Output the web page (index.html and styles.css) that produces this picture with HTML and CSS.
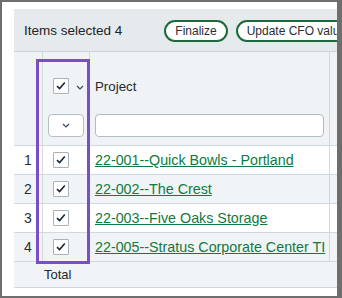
FILE: index.html
```html
<!DOCTYPE html>
<html lang="en">
<head>
  <meta charset="UTF-8">
  <title>Selected items</title>
  <link rel="stylesheet" href="styles.css">
</head>
<body>
  <div class="frame">
    <div class="toolbar">
      <span class="sel-count">Items selected 4</span>
      <span class="divider"></span>
      <button class="pill">Finalize</button>
      <button class="pill">Update CFO value</button>
    </div>

    <div class="grid-wrap">
      <div class="grid">
        <!-- header row -->
        <div class="cell head"></div>
        <div class="cell head check-cell">
          <span class="box"><svg viewBox="0 0 16 16" width="16" height="16"><path d="M4 8.2 L6.6 10.6 L11.8 4.6" fill="none" stroke="#1b2431" stroke-width="1.6"/></svg></span>
          <svg class="chev" viewBox="0 0 8 5" width="8" height="5"><path d="M1 1 L4 4 L7 1" fill="none" stroke="#3b4a63" stroke-width="1.2"/></svg>
        </div>
        <div class="cell head title">Project</div>
        <div class="cell head"></div>

        <!-- filter row -->
        <div class="cell filter"></div>
        <div class="cell filter"><span class="drop"><svg viewBox="0 0 8 5" width="8" height="5"><path d="M1 1 L4 4 L7 1" fill="none" stroke="#3b4a63" stroke-width="1.2"/></svg></span></div>
        <div class="cell filter"><span class="search"></span></div>
        <div class="cell filter"></div>

        <div class="cell row num">1</div>
        <div class="cell row check-cell"><span class="box"><svg viewBox="0 0 16 16" width="16" height="16"><path d="M4 8.2 L6.6 10.6 L11.8 4.6" fill="none" stroke="#1b2431" stroke-width="1.6"/></svg></span></div>
        <div class="cell row"><a href="#">22-001--Quick Bowls - Portland</a></div>
        <div class="cell row"></div>

        <div class="cell row alt num">2</div>
        <div class="cell row alt check-cell"><span class="box"><svg viewBox="0 0 16 16" width="16" height="16"><path d="M4 8.2 L6.6 10.6 L11.8 4.6" fill="none" stroke="#1b2431" stroke-width="1.6"/></svg></span></div>
        <div class="cell row alt"><a href="#">22-002--The Crest</a></div>
        <div class="cell row alt"></div>

        <div class="cell row num">3</div>
        <div class="cell row check-cell"><span class="box"><svg viewBox="0 0 16 16" width="16" height="16"><path d="M4 8.2 L6.6 10.6 L11.8 4.6" fill="none" stroke="#1b2431" stroke-width="1.6"/></svg></span></div>
        <div class="cell row"><a href="#">22-003--Five Oaks Storage</a></div>
        <div class="cell row"></div>

        <div class="cell row alt num">4</div>
        <div class="cell row alt check-cell"><span class="box"><svg viewBox="0 0 16 16" width="16" height="16"><path d="M4 8.2 L6.6 10.6 L11.8 4.6" fill="none" stroke="#1b2431" stroke-width="1.6"/></svg></span></div>
        <div class="cell row alt"><a href="#">22-005--Stratus Corporate Center TI</a></div>
        <div class="cell row alt"></div>

        <div class="cell total"></div>
        <div class="cell total total-label">Total</div>
        <div class="cell total"></div>
        <div class="cell total"></div>
      </div>
      <div class="highlight"></div>
    </div>
  </div>
</body>
</html>
```

FILE: styles.css
```css
body {
  margin: 0;
  font-family: "Liberation Sans", Arial, sans-serif;
  color: #2b2f33;
}
.frame {
  width: 342px;
  height: 298px;
  box-sizing: border-box;
  border: 2px solid #6e6e6e;
  border-right-width: 5px;
  background: #fff;
  padding: 7px 0 0 12px;
  overflow: hidden;
}
.toolbar {
  height: 43px;
  box-sizing: border-box;
  background: #e5eaed;
  border-bottom: 1px solid #cdd5da;
  display: flex;
  align-items: center;
  padding-left: 10px;
  white-space: nowrap;
  padding-top: 1px;
}
.sel-count {
  font-size: 13.5px;
  color: #1f2328;
}
.divider {
  width: 1px;
  height: 22px;
  background: #c9d0d4;
  margin: 0 8px 0 34px;
}
.pill {
  font-family: inherit;
  font-size: 12px;
  color: #2a2e33;
  background: #fff;
  border: 2px solid #1d6a3e;
  border-radius: 11px;
  height: 22px;
  padding: 0 9px;
  margin-right: 8px;
  flex-shrink: 0;
}
.grid-wrap {
  position: relative;
}
.grid {
  display: grid;
  grid-template-columns: 29px 47px 240px 40px;
}
.cell {
  box-sizing: border-box;
  border-right: 1px solid #d2d9dd;
  display: flex;
  align-items: center;
  white-space: nowrap;
  overflow: hidden;
}
.head {
  height: 60px;
  padding-top: 8px;
  background: #eff3f5;
}
.title {
  font-size: 13.3px;
  padding-left: 5px;
  color: #24282c;
}
.filter {
  height: 34px;
  align-items: flex-start;
  padding-top: 2px;
  background: #eff3f5;
  border-bottom: 1px solid #d2d9dd;
}
.check-cell {
  padding-left: 10px;
}
.box {
  width: 16px;
  height: 16px;
  box-sizing: border-box;
  border: 1px solid #a9b3b9;
  background: #fff;
  border-radius: 1px;
  display: flex;
  align-items: center;
  justify-content: center;
}
.box svg {
  flex-shrink: 0;
}
.chev {
  margin-left: 7px;
  margin-top: 2px;
}
.drop {
  width: 36px;
  height: 23px;
  box-sizing: border-box;
  margin-left: 5px;
  border: 1px solid #b6c0c5;
  border-radius: 4px;
  background: #fff;
  display: flex;
  align-items: center;
  justify-content: center;
}
.search {
  width: 229px;
  height: 23px;
  box-sizing: border-box;
  margin-left: 5px;
  border: 1px solid #b0bcc1;
  border-radius: 4px;
  background: #fff;
}
.row {
  height: 29px;
  border-bottom: 1px solid #d2d9dd;
  background: #fff;
}
.row.alt {
  background: #f1f4f6;
}
.num {
  justify-content: center;
  font-size: 14px;
  color: #2b2f33;
}
.row a {
  font-size: 14.3px;
  color: #0f7a3f;
  padding-left: 5px;
}
.total {
  height: 26px;
  background: #f1f4f6;
  border-bottom: 1px solid #d2d9dd;
  border-right: none;
}
.total-label {
  font-size: 13px;
  padding-left: 1px;
  color: #24282c;
}
.highlight {
  position: absolute;
  left: 22px;
  top: 7px;
  width: 54px;
  height: 205px;
  box-sizing: border-box;
  border: 3px solid #7a4fc6;
}
```
